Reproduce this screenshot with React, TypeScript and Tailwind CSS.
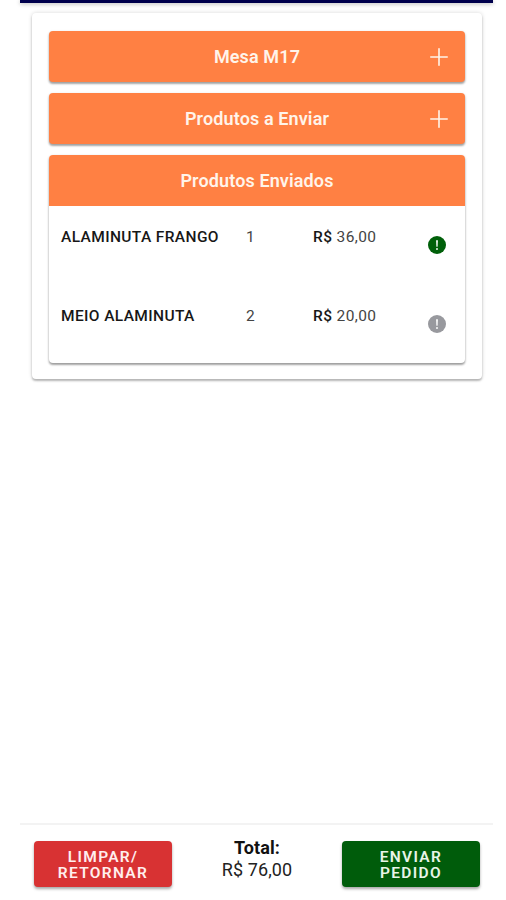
type Product = {
  name: string;
  qty: number;
  price: string;
  sent: boolean;
};

const products: Product[] = [
  { name: 'ALAMINUTA FRANGO', qty: 1, price: '36,00', sent: true },
  { name: 'MEIO ALAMINUTA', qty: 2, price: '20,00', sent: false },
];

function PlusIcon() {
  return (
    <svg viewBox="0 0 18 18" className="absolute right-[17px] h-[18px] w-[18px]" fill="none" stroke="currentColor" strokeWidth="1.6" strokeLinecap="round">
      <path d="M9 0.8V17.2M0.8 9H17.2" />
    </svg>
  );
}

function AlertIcon({ className }: { className: string }) {
  return (
    <svg viewBox="0 0 18 18" className={`h-[18px] w-[18px] ${className}`}>
      <circle cx="9" cy="9" r="9" fill="currentColor" />
      <path d="M8.1 4.2H9.9L9.6 10.7H8.4Z" fill="#fff" />
      <circle cx="9" cy="13" r="0.95" fill="#fff" />
    </svg>
  );
}

function SectionHeader({ title }: { title: string }) {
  return (
    <button className="relative flex h-[51px] w-full items-center justify-center rounded-[4px] bg-[#ff8043] text-[18px] font-semibold tracking-[0.12px] text-[#fff4ea] shadow-[0_2px_2px_rgba(0,0,0,0.28),0_1px_3px_rgba(0,0,0,0.18)]">
      <span>{title}</span>
      <PlusIcon />
    </button>
  );
}

export default function App() {
  return (
    <div className="h-[900px] w-[506px] overflow-hidden bg-white pl-5 font-['Roboto','Liberation_Sans',sans-serif]">
      <div className="flex h-full w-[473px] flex-col">
        <header className="h-[2.5px] shrink-0 bg-[#00004d] shadow-[0_1px_4px_rgba(0,0,0,0.3)]" />

        <main className="flex-1 px-3 pt-[10.5px]">
          <section className="flex h-[366px] w-[450px] flex-col gap-[10.8px] rounded-[4px] px-[17px] pt-[18.4px] shadow-[0_2px_2px_rgba(0,0,0,0.24),0_0_4px_rgba(0,0,0,0.16)]">
            <SectionHeader title="Mesa M17" />
            <SectionHeader title="Produtos a Enviar" />

            <div className="h-[208px] overflow-hidden rounded-[4px] shadow-[0_2px_2px_rgba(0,0,0,0.28),0_1px_3px_rgba(0,0,0,0.2)]">
              <h2 className="flex h-[51px] items-center justify-center bg-[#ff8043] text-[18px] font-semibold tracking-[0.12px] text-[#fff4ea]">
                Produtos Enviados
              </h2>
              {products.map((p) => (
                <div key={p.name} className="flex h-[78.3px] items-start pl-3 pt-[21.5px] text-[15.5px] leading-5 tracking-[0.38px] text-[#444]">
                  <span className="w-[185px] font-medium text-[#171717]">{p.name}</span>
                  <span className="w-[67px]">{p.qty}</span>
                  <span className="w-[114.5px]">
                    <span className="font-medium text-[#171717]">R$</span> {p.price}
                  </span>
                  <AlertIcon className={p.sent ? 'mt-[9px] text-[#00600a]' : 'mt-[9px] text-[#98999e]'} />
                </div>
              ))}
            </div>
          </section>
        </main>

        <footer className="flex h-[77px] shrink-0 items-start justify-between border-t-2 border-[#f3f3f3] pl-[14px] pr-[13px] pt-4">
          <button className="flex h-[46px] w-[138px] flex-col items-center rounded-[4px] bg-[#d83233] pt-2 text-[15.5px] font-semibold leading-4 tracking-[1.3px] text-[#ffeeee] shadow-[0_2px_3px_rgba(0,0,0,0.35)]">
            <span>LIMPAR/</span>
            <span>RETORNAR</span>
          </button>
          <p className="-mt-[4.5px] text-center text-[18px] leading-[22px] tracking-[0.1px] text-[#222]">
            <strong className="block font-bold text-[#111]">Total:</strong>
            R$ 76,00
          </p>
          <button className="flex h-[46px] w-[138px] flex-col items-center rounded-[4px] bg-[#005c0b] pt-2 text-[15.5px] font-semibold leading-4 tracking-[1.3px] text-[#e8f5e8] shadow-[0_2px_3px_rgba(0,0,0,0.35)]">
            <span>ENVIAR</span>
            <span>PEDIDO</span>
          </button>
        </footer>
      </div>
    </div>
  );
}
